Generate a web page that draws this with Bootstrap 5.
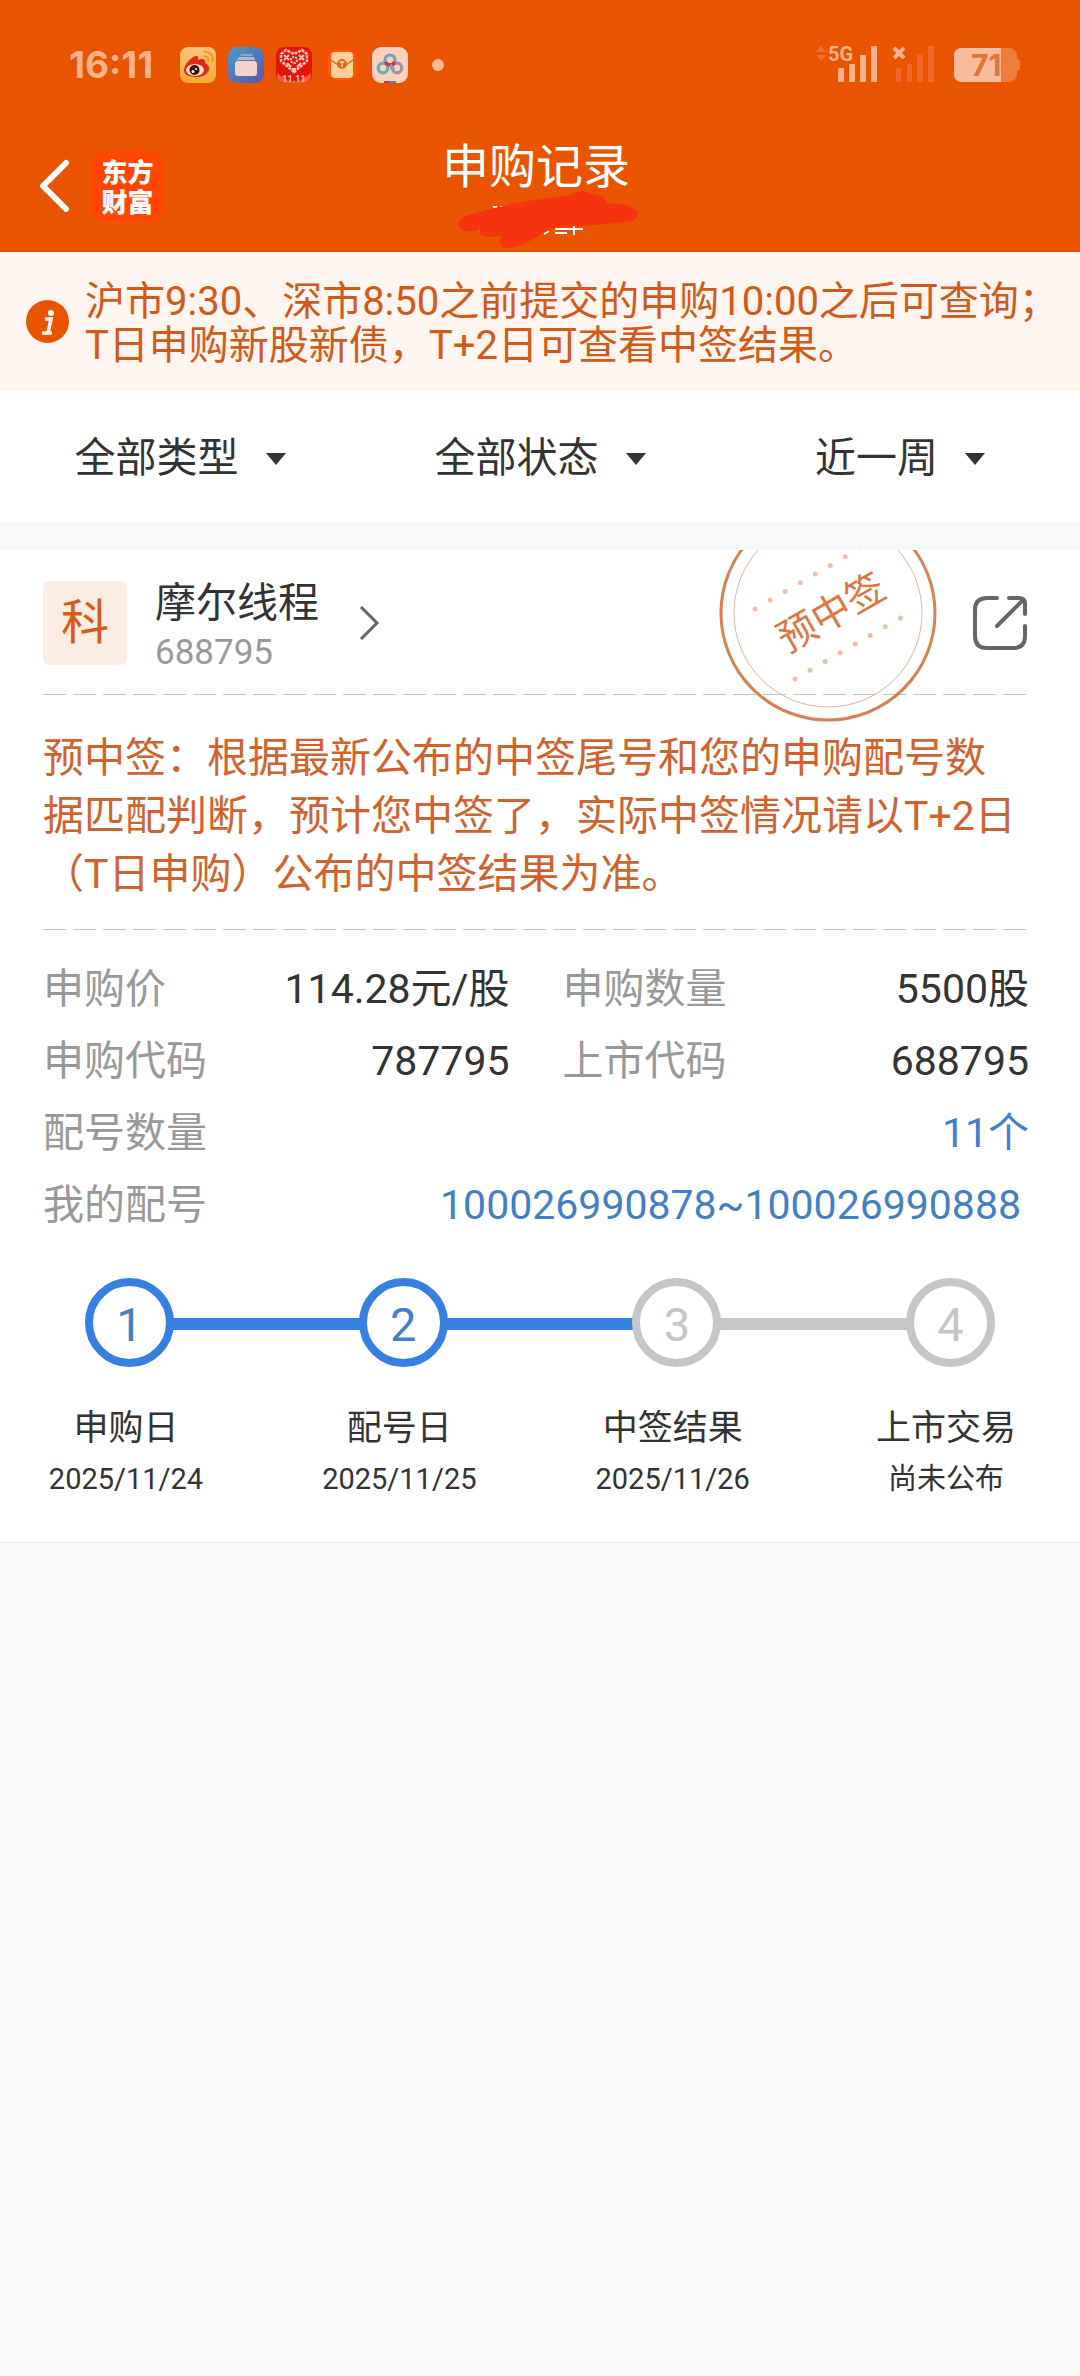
<!DOCTYPE html>
<html lang="zh-CN">
<head>
<meta charset="utf-8">
<meta name="viewport" content="width=device-width, initial-scale=1">
<title>申购记录</title>
<link href="https://cdn.jsdelivr.net/npm/bootstrap@5.3.0/dist/css/bootstrap.min.css" rel="stylesheet">
<style>
  :root { --brand: #e95400; --blue: #3580e0; --grey: #c6c6c6; --ink: #333; }
  body { background: #f6f8fa; color: var(--ink); font-family: Roboto, "Noto Sans CJK SC", sans-serif; font-size: 41px; line-height: 58px; }
  .app-header { background: var(--brand); }
  .status-bar { padding: 45px 60px 0 69px; height: 85px; color: #ffb18b; }
  .clock { font: 700 37px/40px Inter, sans-serif; margin-right: 27px; }
  .app-icons { gap: 12px; }
  .nav-row { padding: 54px 44px 3px 36px; }
  .nav-side { margin-top: 12px; gap: 19px; }
  .logo-tile { width: 71px; height: 70px; border-radius: 14px; background: #ff4500; font: 900 26px/30px "Noto Sans CJK SC", sans-serif; }
  .page-title { font-size: 47px; line-height: 56px; font-weight: 400; }
  .notice { background: #fff5f0; color: #d05a1a; padding: 28px 26px 23px; gap: 16px; font-size: 40px; line-height: 44px; }
  .notice svg { margin-bottom: 6px; }
  .filters { padding: 38px 0 34px; }
  .filters .form-select {
    --bs-form-select-bg-img: url("data:image/svg+xml,%3csvg xmlns='http://www.w3.org/2000/svg' viewBox='0 0 20 12'%3e%3cpath d='M0 0h20L10 12z' fill='%23333'/%3e%3c/svg%3e");
    background-position: right 24px; background-size: 20px 12px; background-color: transparent;
    font-size: 41px; line-height: 58px; color: var(--ink); padding: 0 47px 0 0;
  }
  .record { margin-top: 29px; padding: 0 51px 38px 43px; border-bottom: 1px solid #ebebeb; }
  .record-head { height: 144px; padding: 30px 2px 28px 0; }
  .board-tag { width: 84px; height: 84px; border-radius: 6px; background: #fcede4; color: #d95a15; font-size: 48px; margin-right: 28px; }
  .stock-title { padding-top: 10px; line-height: 50px; }
  .stock-code { font-size: 35px; color: #999; }
  .dash-line { height: 1px; background: repeating-linear-gradient(90deg, #c4c4c4 0 23px, transparent 23px 30px); }
  .stamp { top: -47px; right: 142px; pointer-events: none; }
  .hint { color: #d2622d; padding: 34px 0 26px; }
  .facts { padding-top: 23px; column-gap: 53px; display: grid; grid-template-columns: 1fr 1fr; }
  .fact { height: 72px; }
  .fact dt { font-weight: 400; color: #999; }
  .fact-wide { grid-column: 1 / -1; }
  .fact a { color: #437fc4; text-decoration: none; }
  .track { padding: 37px 34px 0 42px; }
  .node { width: 89px; height: 89px; padding-top: 4px; border: 8px solid var(--grey); color: var(--grey); font-size: 47px; }
  .link-bar { height: 12px; background: var(--grey); margin: 3px -2px 0; }
  .node.done { border-color: var(--blue); color: #437fc4; }
  .link-bar.done { background: var(--blue); }
  .step-label { width: 166px; font-size: 35px; line-height: 50px; }
  .step-date { font-size: 29px; }
  .step-labels { padding-top: 37px; }
</style>
</head>
<body>
<header class="app-header text-white">
  <div class="status-bar d-flex align-items-center">
    <span class="clock">16:11</span>
    <div class="app-icons d-flex align-items-center">
      <svg width="36" height="36" viewBox="0 0 36 36"><defs><linearGradient id="ga" x2="0" y2="1"><stop stop-color="#ffc27e"/><stop offset="1" stop-color="#ffa928"/></linearGradient></defs><rect width="36" height="36" rx="8" fill="url(#ga)"/><path d="M4 23c0-6 9-15 13-14 2 1 1 3 1 4 4-2 8-1 7 3 7 3 5 14-8 14C9 30 4 28 4 23z" fill="#e02b1c"/><ellipse cx="15" cy="23" rx="9" ry="6" fill="#ffdcc4"/><circle cx="14.500" cy="23" r="5" fill="#3a0d05"/><circle cx="13" cy="24.500" r="1.500" fill="#fff"/><circle cx="16" cy="22" r="1" fill="#fff"/><path d="M24 9c4 0 5 3 4 6M23 5c8-1 11 5 9 10" fill="none" stroke="#e69a24" stroke-width="1.800"/></svg>
      <svg width="36" height="36" viewBox="0 0 36 36"><defs><linearGradient id="gb" x2="1" y2="1"><stop stop-color="#4a9cc8"/><stop offset="1" stop-color="#5457ab"/></linearGradient></defs><rect width="36" height="36" rx="9" fill="url(#gb)"/><path d="M13 7h11l1 2H12z" fill="#8fa8c4"/><path d="M11 10h15l1 3H9z" fill="#b8b9c6"/><rect x="7" y="14" width="22" height="15" rx="3" fill="#f4d3cb"/></svg>
      <svg width="36" height="36" viewBox="0 0 36 36"><rect width="36" height="36" rx="8" fill="#e6150b"/><path d="M1 26q17 14 34 0v4q-2 6-8 6H9q-6 0-8-6z" fill="#ff5a35"/><path d="M3 25h30q-15 20-30 0z" fill="#e6150b"/><path d="M18 25 5 14V7l5-4 8 4 8-4 5 4v7z" fill="#e6150b" stroke="#ffc9b6" stroke-width="2.500" stroke-dasharray="3 1"/><path d="M8 8l5 5m0-5-5 5m15-5 5 5m0-5-5 5M11 16l4 4m6 0 4-4M16 22h4" stroke="#ffc9b6" stroke-width="2"/><circle cx="18" cy="13" r="3" fill="none" stroke="#ffc9b6" stroke-width="2" stroke-dasharray="2 1"/><text x="18" y="35" text-anchor="middle" font-family="Roboto" font-weight="700" font-size="9" fill="#ffc9b6">11.11</text></svg>
      <svg width="36" height="36" viewBox="0 0 36 36"><rect width="36" height="36" rx="9" fill="#f25000"/><rect x="4" y="3" width="28" height="30" rx="8" fill="#ff5a05"/><rect x="7" y="5" width="22" height="26" rx="4" fill="#ffd09a"/><path d="M7 13l7 5h8l7-5" fill="none" stroke="#c46a30" stroke-width="1.200"/><circle cx="18" cy="17" r="5" fill="#dd6a1c"/><path d="M15.500 15h5M18 15v5" stroke="#ffd09a" stroke-width="1.500"/></svg>
      <svg width="36" height="36" viewBox="0 0 36 36"><rect width="36" height="36" rx="9" fill="#fbd0bd"/><g fill="none" stroke-width="3.200"><circle cx="11" cy="21" r="4.800" stroke="#67aeb2"/><circle cx="25" cy="21" r="4.800" stroke="#a08db0"/><circle cx="18" cy="13" r="5" stroke="#6f9fb8"/><path d="M13.500 15a5 5 0 0 0 9 0" stroke="#e0284a"/><path d="M18 18l4 5" stroke="#7ba7b4"/></g><path d="M12 34h6v2h-6z" fill="#e0284a"/><path d="M18 34h6v2h-6z" fill="#5580b8"/></svg>
    </div>
    <svg class="ms-4" width="12" height="12"><circle cx="6" cy="6" r="6" fill="#ffb795"/></svg>
    <svg class="ms-auto overflow-visible" width="205" height="40" viewBox="815 45 205 40" fill="#ffb18b">
      <path d="M816 52l5-6 5 6zM816 55l5 6 5-6z" fill="#ef7330"/>
      <text x="828" y="61" font-family="Roboto" font-weight="700" font-size="20">5G</text>
      <rect x="838" y="68" width="6" height="14" rx="1"/><rect x="849" y="64" width="6" height="18" rx="1"/><rect x="860" y="55" width="6" height="27" rx="1"/><rect x="871" y="46" width="6" height="36" rx="1"/>
      <path d="M894 48l10 10m0-10-10 10" stroke="#ffb18b" stroke-width="4"/>
      <g fill="#f0682a"><rect x="896" y="68" width="5" height="14" rx="1"/><rect x="907" y="64" width="5" height="18" rx="1"/><rect x="917" y="55" width="6" height="27" rx="1"/><rect x="928" y="46" width="6" height="36" rx="1"/></g>
      <rect x="954" y="48" width="63" height="34" rx="8" fill="#f07c3c"/><path d="M1017 59q3 0 3 3v6q0 3-3 3z" fill="#f07c3c"/>
      <path d="M962 48h39v34h-39q-8 0-8-8V56q0-8 8-8z" fill="#f8bb9e"/>
      <text x="971" y="76" font-family="Inter" font-weight="700" font-size="30" fill="#e2733a">71</text>
    </svg>
  </div>
  <div class="nav-row d-flex align-items-start">
    <div class="nav-side d-flex align-items-center" style="flex:1 1 0">
      <button type="button" class="btn p-0 border-0 d-flex" aria-label="返回">
        <svg width="37" height="60" viewBox="36 157 37 60"><path d="M66 164 43 187l23 23" fill="none" stroke="#fff" stroke-width="6" stroke-linecap="round" stroke-linejoin="round"/></svg>
      </button>
      <div class="logo-tile d-flex align-items-center text-center justify-content-center">东方<br>财富</div>
    </div>
    <div class="d-flex flex-column align-items-center">
      <h1 class="page-title m-0">申购记录</h1>
      <svg class="overflow-visible" width="188" height="54" viewBox="442 195 188 54">
        <path d="M493 207h4m3 0h5M555 229h28M555 233h12M574 226v9M544 234l5-3" stroke="#fff" stroke-width="2"/>
        <path d="M463 217Q495 206 540 199L571 195Q582 188 590 194 605 195 606 203 638 204 638 214 637 221 626 222L581 226Q556 226 550 229L540 235Q520 248 504 248 496 243 503 235 482 240 480 232V227Q478 231 474 231H465Q454 226 463 217z" fill="#f6330f"/>
      </svg>
    </div>
    <div style="flex:1 1 0"></div>
  </div>
</header>

<main>
  <div class="notice d-flex align-items-center">
    <svg class="flex-shrink-0" width="43" height="43" viewBox="0 0 43 43"><circle cx="21.500" cy="21.500" r="21.500" fill="#e95400"/><circle cx="25" cy="13" r="3" fill="#fff5f0"/><path d="M19 19h6l-3 14M16 33h10" fill="none" stroke="#fff5f0" stroke-width="3.600"/></svg>
    <p class="m-0 text-nowrap">沪市9:30、深市8:50之前提交的申购10:00之后可查询；<br>T日申购新股新债，T+2日可查看中签结果。</p>
  </div>

  <form class="filters bg-white d-flex">
    <div class="col d-flex justify-content-center"><select class="form-select w-auto border-0 rounded-0" aria-label="类型"><option>全部类型</option></select></div>
    <div class="col d-flex justify-content-center"><select class="form-select w-auto border-0 rounded-0" aria-label="状态"><option>全部状态</option></select></div>
    <div class="col d-flex justify-content-center"><select class="form-select w-auto border-0 rounded-0" aria-label="时间"><option>近一周</option></select></div>
  </form>

  <section class="record bg-white position-relative overflow-hidden">
    <div class="record-head d-flex align-items-center">
      <div class="board-tag d-flex align-items-center justify-content-center">科</div>
      <div class="stock-title">
        <div>摩尔线程</div>
        <div class="stock-code">688795</div>
      </div>
      <a href="#" class="ms-4 ps-3 d-flex" aria-label="详情"><svg width="22" height="34" viewBox="0 0 22 34"><path d="M2 1l16 16L2 33" fill="none" stroke="#666" stroke-width="3"/></svg></a>
      <button type="button" class="btn p-0 border-0 ms-auto d-flex" aria-label="分享">
        <svg width="54" height="54" viewBox="0 0 54 54" fill="none" stroke="#666" stroke-width="4" stroke-linecap="round" stroke-linejoin="round"><path d="M24 2H14Q2 2 2 14v26q0 12 12 12h26q12 0 12-12V30M36 2h10q6 0 6 6v10M50 4 24 30"/></svg>
      </button>
    </div>
    <svg class="stamp position-absolute" width="220" height="220" viewBox="-110 -110 220 220">
      <circle r="107" fill="none" stroke="#d9804f" stroke-width="3"/>
      <circle r="94" fill="none" stroke="#e6b49b"/>
      <g fill="none" stroke="#efc0a8" stroke-width="5" stroke-linecap="round" stroke-dasharray="0 17.400"><path d="M-73-4 34-66M-33 66 74 4"/></g>
      <text transform="rotate(-30)" x="3" y="15" text-anchor="middle" font-size="39" fill="#e0763f">预中签</text>
    </svg>
    <div class="dash-line"></div>
    <p class="hint m-0 text-nowrap">预中签：根据最新公布的中签尾号和您的申购配号数<br>据匹配判断，预计您中签了，实际中签情况请以T+2日<br>（T日申购）公布的中签结果为准。</p>
    <div class="dash-line"></div>
    <dl class="facts m-0">
      <div class="fact d-flex align-items-center justify-content-between"><dt>申购价</dt><dd class="m-0">114.28元/股</dd></div>
      <div class="fact d-flex align-items-center justify-content-between"><dt>申购数量</dt><dd class="m-0">5500股</dd></div>
      <div class="fact d-flex align-items-center justify-content-between"><dt>申购代码</dt><dd class="m-0">787795</dd></div>
      <div class="fact d-flex align-items-center justify-content-between"><dt>上市代码</dt><dd class="m-0">688795</dd></div>
      <div class="fact fact-wide d-flex align-items-center justify-content-between"><dt>配号数量</dt><dd class="m-0"><a href="#">11个</a></dd></div>
      <div class="fact fact-wide d-flex align-items-center justify-content-between pe-2"><dt>我的配号</dt><dd class="m-0"><a href="#">100026990878~100026990888</a></dd></div>
    </dl>
    <div class="track d-flex align-items-center">
      <div class="node done rounded-circle d-flex align-items-center justify-content-center">1</div>
      <div class="link-bar done flex-fill"></div>
      <div class="node done rounded-circle d-flex align-items-center justify-content-center">2</div>
      <div class="link-bar done flex-fill"></div>
      <div class="node rounded-circle d-flex align-items-center justify-content-center">3</div>
      <div class="link-bar flex-fill"></div>
      <div class="node rounded-circle d-flex align-items-center justify-content-center">4</div>
    </div>
    <div class="step-labels d-flex justify-content-between text-center">
      <div class="step-label">申购日<div class="step-date">2025/11/24</div></div>
      <div class="step-label">配号日<div class="step-date">2025/11/25</div></div>
      <div class="step-label">中签结果<div class="step-date">2025/11/26</div></div>
      <div class="step-label">上市交易<div class="step-date">尚未公布</div></div>
    </div>
  </section>
</main>
<script src="https://cdn.jsdelivr.net/npm/bootstrap@5.3.0/dist/js/bootstrap.bundle.min.js"></script>
</body>
</html>
